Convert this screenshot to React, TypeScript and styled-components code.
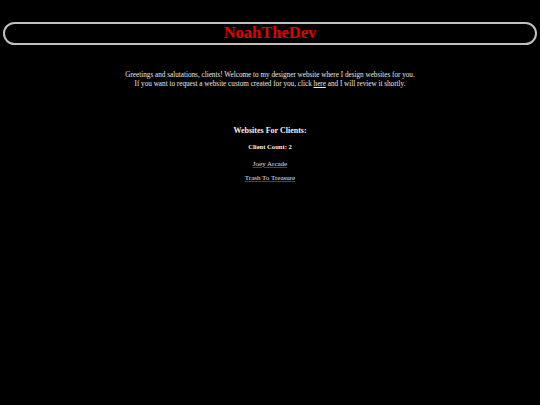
import React from 'react';
import styled, { createGlobalStyle } from 'styled-components';

const GlobalStyle = createGlobalStyle`
  html, body {
    margin: 0;
    padding: 0;
    background: #000000;
  }
  body {
    font-family: "Liberation Serif", "Times New Roman", serif;
    color: #e6e6e6;
    -webkit-font-smoothing: antialiased;
  }
`;

const Page = styled.div`
  width: 540px;
  height: 405px;
  background: #000000;
  padding: 22px 3px 0;
  box-sizing: border-box;
  display: flex;
  flex-direction: column;
  align-items: center;
`;

const Header = styled.header`
  width: 100%;
  height: 23px;
  box-sizing: border-box;
  border: 2px solid #c0c0c0;
  border-radius: 12px;
  display: flex;
  align-items: center;
  justify-content: center;
`;

const Title = styled.h1`
  margin: 0;
  font-size: 16.5px;
  font-weight: bold;
  color: #e00000;
  line-height: 1;
`;

const Intro = styled.p`
  margin: 26px 0 0;
  font-size: 7.2px;
  line-height: 9px;
  text-align: center;
  color: #e8e8e8;
`;

const Link = styled.a`
  color: #e8e8e8;
  text-decoration: underline;
`;

const Section = styled.section`
  margin-top: 36px;
  display: flex;
  flex-direction: column;
  align-items: center;
`;

const SectionTitle = styled.h2`
  margin: 0;
  font-size: 8px;
  line-height: 11px;
  font-weight: bold;
  color: #f0f0f0;
`;

const Count = styled.h3`
  margin: 6px 0 0;
  font-size: 6.6px;
  line-height: 9px;
  font-weight: bold;
  color: #f0f0f0;
`;

const ClientList = styled.div`
  margin-top: 9px;
  display: flex;
  flex-direction: column;
  align-items: center;
  gap: 5px;
`;

const ClientLink = styled.a`
  font-size: 7px;
  line-height: 9px;
  color: #e0e0e8;
  text-decoration: underline;
  text-decoration-color: #3a3aa0;
`;

const clients = ['Joey Arcade', 'Trash To Treasure'];

const App: React.FC = () => {
  return (
    <>
      <GlobalStyle />
      <Page>
        <Header>
          <Title>NoahTheDev</Title>
        </Header>
        <Intro>
          Greetings and salutations, clients! Welcome to my designer website where I design websites for you.
          <br />
          If you want to request a website custom created for you, click <Link href="#">here</Link> and I will review it shortly.
        </Intro>
        <Section>
          <SectionTitle>Websites For Clients:</SectionTitle>
          <Count>Client Count: {clients.length}</Count>
          <ClientList>
            {clients.map((c) => (
              <ClientLink key={c} href="#">{c}</ClientLink>
            ))}
          </ClientList>
        </Section>
      </Page>
    </>
  );
};

export default App;
